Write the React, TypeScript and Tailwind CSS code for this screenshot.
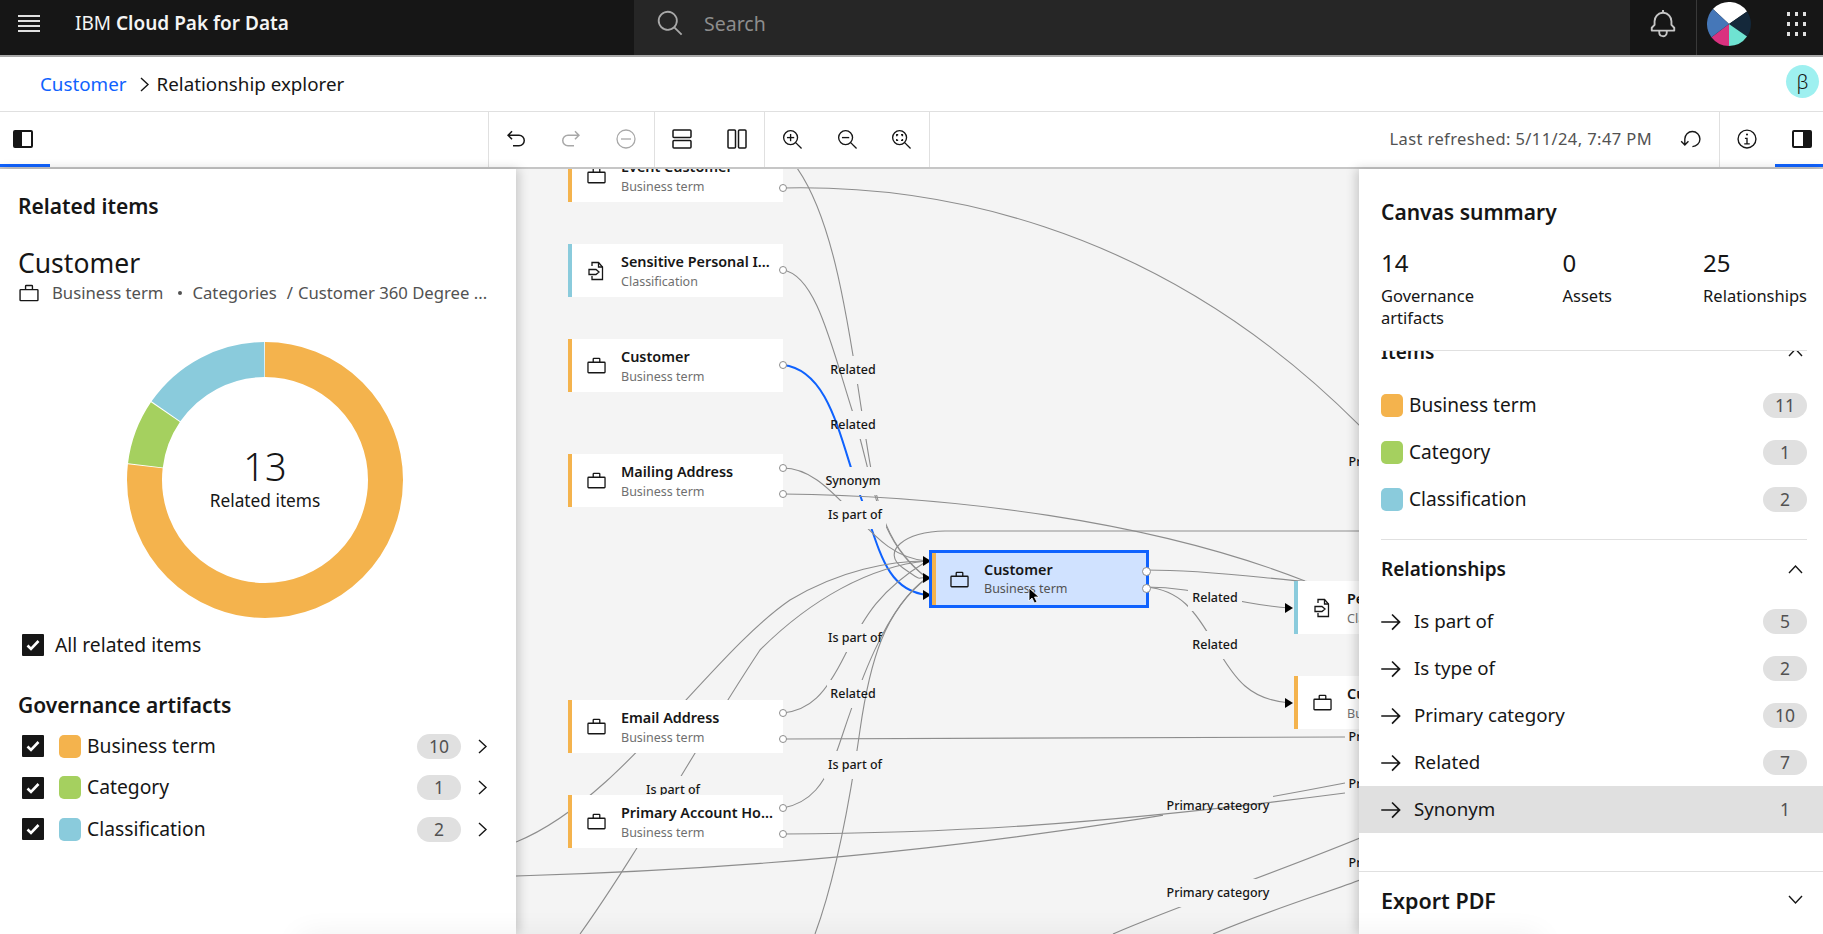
import React from 'react';

const FONT = "font-['Noto_Sans',sans-serif]";

const ORANGE = '#f4b34d';
const GREEN = '#a5d05f';
const BLUE = '#8acbdc';

const Carbon: React.FC<{ d: string | string[]; size?: number; className?: string }> = ({ d, size = 24, className }) => (
  <svg width={size} height={size} viewBox="0 0 32 32" fill="currentColor" className={className}>
    {(Array.isArray(d) ? d : [d]).map((p, i) => (
      <path key={i} d={p} />
    ))}
  </svg>
);

const PORTFOLIO =
  'M28,10H22V6a2,2,0,0,0-2-2H12a2,2,0,0,0-2,2v4H4a2,2,0,0,0-2,2V26a2,2,0,0,0,2,2H28a2,2,0,0,0,2-2V12A2,2,0,0,0,28,10ZM12,6h8v4H12ZM4,26V12H28V26Z';
const SEARCH =
  'M29 27.5859l-7.5521-7.5521a11.0177 11.0177 0 1 0-1.4141 1.4141L27.5859 29ZM4 13a9 9 0 1 1 9 9A9.01 9.01 0 0 1 4 13Z';
const BELL =
  'M28.7071,19.293,26,16.5859V13a10.0136,10.0136,0,0,0-9-9.9492V1H15V3.0508A10.0136,10.0136,0,0,0,6,13v3.5859L3.2929,19.293A1,1,0,0,0,3,20v3a1,1,0,0,0,1,1h7v.7768a5.152,5.152,0,0,0,4.5,5.1987A5.0057,5.0057,0,0,0,21,25V24h7a1,1,0,0,0,1-1V20A1,1,0,0,0,28.7071,19.293ZM19,25a3,3,0,0,1-6,0V24h6Zm8-3H5V20.4141L7.707,17.707A1,1,0,0,0,8,17V13a8,8,0,0,1,16,0v4a1,1,0,0,0,.293.707L27,20.4141Z';
const UNDO =
  'M20,10H7.8149l3.5874-3.5859L10,5,4,11,10,17l1.4023-1.4146L7.8179,12H20a6,6,0,0,1,0,12H12v2h8a8,8,0,0,0,0-16Z';
const REDO =
  'M12,10H24.1851L20.5977,6.4141,22,5l6,6-6,6-1.4023-1.4146L24.1821,12H12a6,6,0,0,0,0,12h8v2H12a8,8,0,0,1,0-16Z';
const RESET =
  'M18,28A12,12,0,1,0,6,16v6.2L2.4,18.6,1,20l6,6,6-6-1.4-1.4L8,22.2V16H8A10,10,0,1,1,18,26Z';
const INFO = [
  'M17 22v-8h-4v2h2v6h-3v2h8v-2h-3z',
  'M16 8a1.5 1.5 0 1 0 1.5 1.5A1.5 1.5 0 0 0 16 8z',
  'M16 30a14 14 0 1 1 14-14 14 14 0 0 1-14 14zm0-26a12 12 0 1 0 12 12A12 12 0 0 0 16 4z',
];
const ARROW = 'M18 6l-1.43 1.393L24.15 15H4v2h20.15l-7.58 7.573L18 26l10-10L18 6z';

const Chevron: React.FC<{ dir: 'right' | 'up' | 'down'; className?: string }> = ({ dir, className }) => {
  const points = dir === 'right' ? '5,2 12,8.5 5,15' : dir === 'up' ? '2,12 8.5,5 15,12' : '2,5 8.5,12 15,5';
  return (
    <svg width="17" height="17" viewBox="0 0 17 17" fill="none" stroke="currentColor" strokeWidth="1.4" className={className}>
      <polyline points={points} />
    </svg>
  );
};

const PanelToggle: React.FC<{ side: 'left' | 'right' }> = ({ side }) => (
  <svg width="20" height="18" viewBox="0 0 20 18">
    <rect x="1" y="1" width="18" height="16" rx="1" fill="#fff" stroke="#161616" strokeWidth="2" />
    <rect x={side === 'left' ? 1 : 11} y="1" width="8" height="16" fill="#161616" />
  </svg>
);

const Magnifier: React.FC<{ kind: 'in' | 'out' | 'fit' }> = ({ kind }) => (
  <svg width="21" height="21" viewBox="0 0 22 22" fill="none" stroke="#161616" strokeWidth="1.4">
    <circle cx="9" cy="9" r="7.3" />
    <line x1="14.3" y1="14.3" x2="20.5" y2="20.5" />
    {kind !== 'fit' && <line x1="5.2" y1="9" x2="12.8" y2="9" />}
    {kind === 'in' && <line x1="9" y1="5.2" x2="9" y2="12.8" />}
    {kind === 'fit' && <path d="M6 7.5V6h1.5M10.5 6H12v1.5M12 10.500V12h-1.5M7.500 12H6v-1.500" />}
  </svg>
);

const ToolBtn: React.FC<{ children: React.ReactNode }> = ({ children }) => (
  <div className="flex-1 h-full flex items-center justify-center pb-px">{children}</div>
);

const Check: React.FC = () => (
  <div className="w-[22px] h-[22px] bg-[#161616] rounded-[1px] flex items-center justify-center shrink-0">
    <svg width="14" height="12" viewBox="0 0 14 12" fill="none" stroke="#fff" strokeWidth="2.6">
      <polyline points="1.500,6.500 5,10 12.500,2" />
    </svg>
  </div>
);

const Swatch: React.FC<{ color: string }> = ({ color }) => (
  <span className="w-[22px] h-[23px] rounded-[5px] shrink-0" style={{ backgroundColor: color }} />
);

const Badge: React.FC<{ n: number; plain?: boolean }> = ({ n, plain }) => (
  <span className={`w-[44px] h-[25px] rounded-full flex items-center justify-center text-[17.500px] text-[#525252] ${plain ? '' : 'bg-[#e0e0e0]'}`}>
    {n}
  </span>
);

const Sensitive: React.FC = () => (
  <svg width="21" height="20" viewBox="0 0 21 20" fill="none" stroke="#161616" strokeWidth="1.3" className="shrink-0">
    <path d="M6 5V1.500h6.500l4 4.500v12.500H6V15" />
    <path d="M12.500 1.500v4.500h4" />
    <path d="M3 8.500h7l3 2.500-3 2.500H3z" />
  </svg>
);

// nodes on the canvas, page coordinates
type NodeData = { x: number; y: number; title: string; sub: string; color: string; ports: number[]; icon?: 'doc' };

const NODES: NodeData[] = [
  { x: 568, y: 149, title: 'Event Customer', sub: 'Business term', color: ORANGE, ports: [39] },
  { x: 568, y: 244, title: 'Sensitive Personal I...', sub: 'Classification', color: BLUE, ports: [26], icon: 'doc' },
  { x: 568, y: 339, title: 'Customer', sub: 'Business term', color: ORANGE, ports: [26] },
  { x: 568, y: 454, title: 'Mailing Address', sub: 'Business term', color: ORANGE, ports: [14, 40] },
  { x: 568, y: 700, title: 'Email Address', sub: 'Business term', color: ORANGE, ports: [13, 39] },
  { x: 568, y: 795, title: 'Primary Account Ho...', sub: 'Business term', color: ORANGE, ports: [13, 39] },
  { x: 1294, y: 581, title: 'Personal Information', sub: 'Classification', color: BLUE, ports: [], icon: 'doc' },
  { x: 1294, y: 676, title: 'Customer', sub: 'Business term', color: ORANGE, ports: [] },
];

const LABELS: { x: number; y: number; t: string }[] = [
  { x: 853, y: 370, t: 'Related' },
  { x: 853, y: 425, t: 'Related' },
  { x: 853, y: 481, t: 'Synonym' },
  { x: 855, y: 515, t: 'Is part of' },
  { x: 855, y: 638, t: 'Is part of' },
  { x: 853, y: 694, t: 'Related' },
  { x: 855, y: 765, t: 'Is part of' },
  { x: 673, y: 790, t: 'Is part of' },
  { x: 1215, y: 598, t: 'Related' },
  { x: 1215, y: 645, t: 'Related' },
  { x: 1218, y: 806, t: 'Primary category' },
  { x: 1218, y: 893, t: 'Primary category' },
  { x: 1400, y: 462, t: 'Primary category' },
  { x: 1400, y: 737, t: 'Primary category' },
  { x: 1400, y: 784, t: 'Primary category' },
  { x: 1400, y: 863, t: 'Primary category' },
];

const Line: React.FC<{ d: string }> = ({ d }) => <path d={d} fill="none" stroke="#8d8d8d" strokeWidth="1.1" />;
const Mask: React.FC<{ x: number; y: number; w: number; h?: number }> = ({ x, y, w, h = 28 }) => (
  <rect x={x - w / 2} y={y - h / 2} width={w} height={h} fill="#f4f4f4" />
);
const Tip: React.FC<{ x: number; y: number }> = ({ x, y }) => <polygon points={`${x - 8},${y - 5} ${x},${y} ${x - 8},${y + 5}`} fill="#000" />;

const Edges: React.FC = () => (
  <svg className="absolute left-0 top-0" width="844" height="765" viewBox="516 169 844 765">
    <Line d="M783 188 C 920 185, 1150 215, 1360 426" />
    <Line d="M797 168 C 830 215, 845 300, 860 400 S 880 540, 927 578" />
    <Mask x={853} y={370} w={50} />
    <Line d="M783 270 C 815 275, 830 340, 852 410 S 875 540, 927 578" />
    <Mask x={853} y={425} w={50} />
    <path d="M783 365 C 830 370, 840 440, 860 495 S 885 590, 927 595" fill="none" stroke="#0f62fe" strokeWidth="2" />
    <Mask x={853} y={481} w={62} />
    <Line d="M783 468 C 810 468, 830 490, 850 510 S 890 558, 927 561" />
    <Mask x={855} y={515} w={62} />
    <Line d="M783 494 C 950 496, 1150 520, 1305 581" />
    <Line d="M1360 531 L 945 531 C 905 531, 880 552, 903 568 S 915 576, 927 578" />
    <Line d="M516 842 C 620 800, 710 655, 790 600 C 840 570, 890 561, 927 561" />
    <Line d="M580 934 C 640 850, 700 740, 760 650 C 810 600, 870 566, 927 561" />
    <Line d="M783 713 C 810 710, 825 695, 845 655 S 880 590, 927 561" />
    <Mask x={855} y={638} w={62} />
    <Line d="M783 808 C 810 803, 825 785, 838 748 S 880 610, 927 578" />
    <Mask x={853} y={694} w={52} />
    <Line d="M815 934 C 835 880, 850 800, 860 730 S 885 610, 927 578" />
    <Mask x={855} y={765} w={62} />
    <Mask x={673} y={790} w={62} />
    <Line d="M783 739 L 1345 737" />
    <Line d="M516 876 C 800 868, 1050 840, 1345 783" />
    <Mask x={1218} y={806} w={110} />
    <Line d="M783 834 C 950 833, 1100 825, 1345 793" />
    <Line d="M1113 934 C 1180 905, 1270 875, 1360 838" />
    <Line d="M1213 934 C 1270 910, 1320 895, 1360 880" />
    <Mask x={1218} y={893} w={110} />
    <Line d="M1146 570 C 1210 570, 1260 578, 1313 582" />
    <Line d="M1146 587 C 1200 587, 1230 604, 1290 608" />
    <Line d="M1146 587 C 1180 590, 1195 610, 1215 645 S 1250 700, 1290 703" />
    <Mask x={1215} y={598} w={54} h={26} />
    <Mask x={1215} y={645} w={54} />
    <Tip x={931} y={561} />
    <Tip x={931} y={578} />
    <Tip x={931} y={595} />
    <Tip x={1293} y={608} />
    <Tip x={1293} y={703} />
  </svg>
);

const NodeCard: React.FC<{ node: NodeData }> = ({ node }) => (
  <div
    className="absolute w-[215px] h-[53px] bg-white border-l-4 flex items-center pl-[14px]"
    style={{ left: node.x - 516, top: node.y - 169, borderLeftColor: node.color }}
  >
    {node.icon === 'doc' ? <Sensitive /> : <Carbon d={PORTFOLIO} size={21} className="text-[#161616] shrink-0" />}
    <div className="ml-[14px] min-w-0 whitespace-nowrap pt-[2px]">
      <div className="text-[14.400px] leading-[18px] font-semibold text-[#161616]">{node.title}</div>
      <div className="mt-[2px] text-[12.500px] leading-[18px] text-[#6f6f6f]">{node.sub}</div>
    </div>
    {node.ports.map(p => (
      <span
        key={p}
        className="absolute right-[-4px] w-[8px] h-[8px] -mt-[4px] rounded-full border border-[#8d8d8d] bg-white"
        style={{ top: p }}
      />
    ))}
  </div>
);

const Canvas: React.FC = () => (
  <div className="relative flex-1 bg-[#f4f4f4] overflow-hidden">
    <Edges />
    {LABELS.map((l, i) => (
      <span
        key={i}
        className="absolute -translate-x-1/2 -translate-y-1/2 whitespace-nowrap text-[12.500px] leading-[16px] font-medium text-[#161616]"
        style={{ left: l.x - 516, top: l.y - 169 }}
      >
        {l.t}
      </span>
    ))}
    {NODES.map(n => (
      <NodeCard key={n.title + n.y} node={n} />
    ))}
    {/* selected node */}
    <div className="absolute left-[413px] top-[381px] w-[220px] h-[58px] border-[3px] border-[#0f62fe] bg-[#d0e2ff] flex items-center">
      <span className="w-[4px] h-full bg-[#f4b34d] shrink-0" />
      <Carbon d={PORTFOLIO} size={21} className="ml-[13px] text-[#161616] shrink-0" />
      <div className="ml-[14px] whitespace-nowrap">
        <div className="text-[14.400px] leading-[18px] font-semibold text-[#161616]">Customer</div>
        <div className="mt-px text-[12.500px] leading-[18px] text-[#525252]">Business term</div>
      </div>
      <span className="absolute left-[210px] top-[14px] w-[9px] h-[9px] rounded-full border border-[#8d8d8d] bg-white" />
      <span className="absolute left-[210px] top-[31px] w-[9px] h-[9px] rounded-full border border-[#8d8d8d] bg-white" />
      <svg width="12" height="17" viewBox="0 0 12 17" className="absolute left-[96px] top-[34px]">
        <path d="M1 1v13l3-3 2.500 5 2.500-1-2.500-5H11z" fill="#000" stroke="#fff" strokeWidth="0.8" />
      </svg>
    </div>
  </div>
);

const Donut: React.FC = () => {
  const r = 120.5;
  const c = 2 * Math.PI * r;
  const parts = [
    { v: 10, color: ORANGE },
    { v: 1, color: GREEN },
    { v: 2, color: BLUE },
  ];
  let acc = 0;
  return (
    <div className="relative w-[276px] h-[276px] ml-[109px] mt-[38px]">
      <svg width="276" height="276" viewBox="0 0 276 276" className="-rotate-90">
        {parts.map(p => {
          const len = (p.v / 13) * c;
          const el = (
            <circle
              key={p.color}
              cx="138"
              cy="138"
              r={r}
              fill="none"
              stroke={p.color}
              strokeWidth="35"
              strokeDasharray={`${len - 1} ${c - len + 1}`}
              strokeDashoffset={-acc}
            />
          );
          acc += len;
          return el;
        })}
      </svg>
      <div className="absolute inset-0 flex flex-col items-center pt-[100px]">
        <span className="text-[38px] leading-[48px] font-light text-[#161616]">13</span>
        <span className="text-[17.300px] leading-[24px] text-[#161616] -mt-[1px]">Related items</span>
      </div>
    </div>
  );
};

const LeftPanel: React.FC = () => (
  <aside className="relative z-10 w-[516px] bg-white shadow-[3px_0_10px_rgba(0,0,0,0.18)] pl-[18px] overflow-hidden">
    <h2 className="mt-[23px] text-[21px] leading-[28px] font-semibold text-[#161616]">Related items</h2>
    <div className="mt-[25px] text-[26.500px] leading-[36px] text-[#161616]">Customer</div>
    <div className="mt-[1px] flex items-center h-[22px] text-[16.700px] text-[#525252] whitespace-nowrap">
      <Carbon d={PORTFOLIO} size={22} className="text-[#161616] shrink-0" />
      <span className="ml-[12px]">Business term</span>
      <span className="w-[4px] h-[4px] rounded-full bg-[#525252] ml-[15px]" />
      <span className="ml-[10px]">Categories</span>
      <span className="ml-[10px]">/</span>
      <span className="ml-[5px]">Customer 360 Degree ...</span>
    </div>
    <Donut />
    <div className="mt-[15px] ml-[4px] flex items-center gap-[11px] text-[19.300px] leading-[24px] text-[#161616]">
      <Check />
      All related items
    </div>
    <h3 className="mt-[34px] text-[21px] leading-[28px] font-semibold text-[#161616]">Governance artifacts</h3>
    <div className="mt-[14px] ml-[4px] flex flex-col gap-[15.500px]">
      {[
        { c: ORANGE, t: 'Business term', n: 10 },
        { c: GREEN, t: 'Category', n: 1 },
        { c: BLUE, t: 'Classification', n: 2 },
      ].map(r => (
        <div key={r.t} className="h-[26px] flex items-center text-[19.300px] text-[#161616]">
          <Check />
          <span className="ml-[15px] flex">
            <Swatch color={r.c} />
          </span>
          <span className="ml-[6px]">{r.t}</span>
          <span className="ml-auto">
            <Badge n={r.n} />
          </span>
          <Chevron dir="right" className="ml-[13px] mr-[25px] text-[#161616]" />
        </div>
      ))}
    </div>
  </aside>
);

const RightPanel: React.FC = () => (
  <aside className="relative z-10 w-[464px] bg-white shadow-[-3px_0_10px_rgba(0,0,0,0.18)] flex flex-col overflow-hidden">
    <div className="relative z-10 h-[182px] bg-white pl-[22px] pr-[16px]">
      <div className="h-full border-b border-[#e0e0e0]">
        <h2 className="pt-[29px] text-[21px] leading-[28px] font-semibold text-[#161616]">Canvas summary</h2>
        <div className="mt-[22px] flex text-[#161616]">
          <div className="w-[182px]">
            <div className="text-[24px] leading-[30px]">14</div>
            <div className="mt-[7px] text-[16.500px] leading-[22px]">
              Governance
              <br />
              artifacts
            </div>
          </div>
          <div className="w-[141px]">
            <div className="text-[24px] leading-[30px]">0</div>
            <div className="mt-[7px] text-[16.500px] leading-[22px]">Assets</div>
          </div>
          <div>
            <div className="text-[24px] leading-[30px]">25</div>
            <div className="mt-[7px] text-[16.500px] leading-[22px]">Relationships</div>
          </div>
        </div>
      </div>
    </div>
    <div className="-mt-[13px] text-[#161616]">
      <div className="pl-[22px] pr-[16px]">
        <div className="h-[28px] flex items-center justify-between">
          <span className="text-[19px] font-semibold">Items</span>
          <Chevron dir="up" className="mr-[3px]" />
        </div>
        <div className="mt-[15.500px]">
          {[
            { c: ORANGE, t: 'Business term', n: 11 },
            { c: GREEN, t: 'Category', n: 1 },
            { c: BLUE, t: 'Classification', n: 2 },
          ].map(r => (
            <div key={r.t} className="h-[47px] flex items-center text-[19.100px]">
              <Swatch color={r.c} />
              <span className="ml-[6px]">{r.t}</span>
              <span className="ml-auto">
                <Badge n={r.n} />
              </span>
            </div>
          ))}
        </div>
        <div className="mt-[16.500px] h-px bg-[#e0e0e0]" />
        <div className="mt-[15px] h-[28px] flex items-center justify-between">
          <span className="text-[19px] font-semibold">Relationships</span>
          <Chevron dir="up" className="mr-[3px]" />
        </div>
      </div>
      <div className="mt-[15px]">
        {[
          { t: 'Is part of', n: 5 },
          { t: 'Is type of', n: 2 },
          { t: 'Primary category', n: 10 },
          { t: 'Related', n: 7 },
          { t: 'Synonym', n: 1, hover: true },
        ].map(r => (
          <div key={r.t} className={`h-[47px] pl-[22px] pr-[16px] flex items-center text-[18.700px] ${r.hover ? 'bg-[#e0e0e0]' : ''}`}>
            <Carbon d={ARROW} size={26} className="-ml-[3px] shrink-0" />
            <span className="ml-[10px]">{r.t}</span>
            <span className="ml-auto">
              <Badge n={r.n} plain={r.hover} />
            </span>
          </div>
        ))}
      </div>
      <div className="mt-[38px] border-t border-[#e0e0e0] pl-[22px] pr-[16px] h-[62px] flex items-center justify-between">
        <span className="text-[21.500px] font-semibold -mt-[3px]">Export PDF</span>
        <Chevron dir="down" className="mr-[3px] -mt-[6px]" />
      </div>
    </div>
  </aside>
);

const Avatar: React.FC = () => {
  const slices = [
    { a: -47, b: 55, c: '#ffffff' },
    { a: 55, b: 125, c: '#14283a' },
    { a: 125, b: 180, c: '#6fe3d2' },
    { a: 180, b: 233, c: '#d9327f' },
    { a: 233, b: 313, c: '#4577b8' },
  ];
  const pt = (deg: number) => {
    const rad = (deg * Math.PI) / 180;
    return `${22 + 22 * Math.sin(rad)} ${22 - 22 * Math.cos(rad)}`;
  };
  return (
    <svg width="44" height="44" viewBox="0 0 44 44">
      {slices.map(s => (
        <path key={s.c} d={`M22 22 L${pt(s.a)} A22 22 0 ${s.b - s.a > 180 ? 1 : 0} 1 ${pt(s.b)}Z`} fill={s.c} />
      ))}
    </svg>
  );
};

const Header: React.FC = () => (
  <header className="h-[57px] shrink-0 bg-[#161616] border-b-2 border-[#a8a8a8] flex items-stretch">
    <div className="w-[634px] flex items-center pb-[8px]">
      <div className="ml-[18px] w-[22px] flex flex-col gap-[3.500px]">
        <span className="h-[1.500px] bg-[#e0e0e0]" />
        <span className="h-[1.500px] bg-[#e0e0e0]" />
        <span className="h-[1.500px] bg-[#e0e0e0]" />
        <span className="h-[1.500px] bg-[#e0e0e0]" />
      </div>
      <div className="ml-[35px] text-[19px] text-[#f4f4f4] whitespace-nowrap">
        IBM <span className="font-semibold">Cloud Pak for Data</span>
      </div>
    </div>
    <div className="w-[996px] bg-[#262626] flex items-center pl-[22px] pb-[8px]">
      <Carbon d={SEARCH} size={29} className="text-[#a8a8a8]" />
      <span className="ml-[19px] text-[19.500px] text-[#8d8d8d]">Search</span>
    </div>
    <div className="w-[67px] flex items-center justify-center border-r border-[#393939] pb-[8px]">
      <Carbon d={BELL} size={30} className="text-[#c6c6c6]" />
    </div>
    <div className="flex-1 flex items-center pb-[8px]">
      <span className="ml-[10px] flex">
        <Avatar />
      </span>
      <div className="ml-[36px] grid grid-cols-3 gap-x-[5px] gap-y-[6px]">
        {Array.from({ length: 9 }).map((_, i) => (
          <span key={i} className="w-[3px] h-[4px] bg-[#e0e0e0]" />
        ))}
      </div>
    </div>
  </header>
);

const Toolbar: React.FC = () => (
  <div className="h-[57px] shrink-0 bg-white border-b-2 border-[#c6c6c6] flex items-stretch">
    <div className="relative w-[488.500px] border-r border-[#e0e0e0] pl-[13px] pb-px flex items-center">
      <PanelToggle side="left" />
      <span className="absolute left-0 bottom-0 w-[50px] h-[3px] bg-[#0f62fe]" />
    </div>
    <div className="w-[166px] flex items-center border-r border-[#e0e0e0]">
      <ToolBtn>
        <Carbon d={UNDO} size={24} className="text-[#161616]" />
      </ToolBtn>
      <ToolBtn>
        <Carbon d={REDO} size={24} className="text-[#a8a8a8]" />
      </ToolBtn>
      <ToolBtn>
        <svg width="20" height="20" viewBox="0 0 20 20" fill="none" stroke="#a8a8a8" strokeWidth="1.300">
          <circle cx="10" cy="10" r="9" />
          <line x1="5" y1="10" x2="15" y2="10" />
        </svg>
      </ToolBtn>
    </div>
    <div className="w-[110.500px] flex items-center border-r border-[#e0e0e0]">
      <ToolBtn>
        <svg width="20" height="20" viewBox="0 0 20 20" fill="none" stroke="#161616" strokeWidth="1.500">
          <rect x="1" y="1" width="18" height="7.500" rx="1" />
          <rect x="1" y="11.500" width="18" height="7.500" rx="1" />
        </svg>
      </ToolBtn>
      <ToolBtn>
        <svg width="20" height="20" viewBox="0 0 20 20" fill="none" stroke="#161616" strokeWidth="1.500">
          <rect x="1" y="1" width="7.500" height="18" rx="1" />
          <rect x="11.500" y="1" width="7.500" height="18" rx="1" />
        </svg>
      </ToolBtn>
    </div>
    <div className="w-[165px] flex items-center border-r border-[#e0e0e0]">
      <ToolBtn>
        <Magnifier kind="in" />
      </ToolBtn>
      <ToolBtn>
        <Magnifier kind="out" />
      </ToolBtn>
      <ToolBtn>
        <Magnifier kind="fit" />
      </ToolBtn>
    </div>
    <div className="flex-1 flex items-center justify-end border-r border-[#e0e0e0] pb-px">
      <span className="text-[16.500px] text-[#525252] tracking-[0.4px] whitespace-nowrap">Last refreshed: 5/11/24, 7:47 PM</span>
      <span className="ml-[28px] mr-[17px] flex">
        <Carbon d={RESET} size={22} className="text-[#161616]" />
      </span>
    </div>
    <div className="w-[55px] flex items-center justify-center pb-px pr-px">
      <Carbon d={INFO} size={22} className="text-[#161616]" />
    </div>
    <div className="relative w-[48px] flex items-center justify-center pl-[6px] pb-px">
      <PanelToggle side="right" />
      <span className="absolute left-0 right-0 bottom-0 h-[3px] bg-[#0f62fe]" />
    </div>
  </div>
);

export default function App() {
  return (
    <div className={`relative w-[1823px] h-[934px] overflow-hidden bg-white flex flex-col ${FONT}`}>
      <Header />
      <div className="h-[55px] shrink-0 border-b border-[#e0e0e0] flex items-center pl-[40px] text-[18.800px] text-[#161616]">
        <span className="text-[#0f62fe]">Customer</span>
        <Chevron dir="right" className="ml-[9px] mr-[4px]" />
        <span>Relationship explorer</span>
        <span className="ml-auto mr-[4px] mb-[5px] w-[33px] h-[33px] rounded-full bg-[#9ef0f0] flex items-center justify-center text-[20px] font-light text-[#161616]">
          β
        </span>
      </div>
      <Toolbar />
      <div className="flex-1 flex min-h-0">
        <LeftPanel />
        <Canvas />
        <RightPanel />
      </div>
      <div className="absolute z-20 left-[300px] top-[940px] w-[1240px] h-[10px] shadow-[0_0_30px_rgba(0,0,0,0.14)]" />
    </div>
  );
}
